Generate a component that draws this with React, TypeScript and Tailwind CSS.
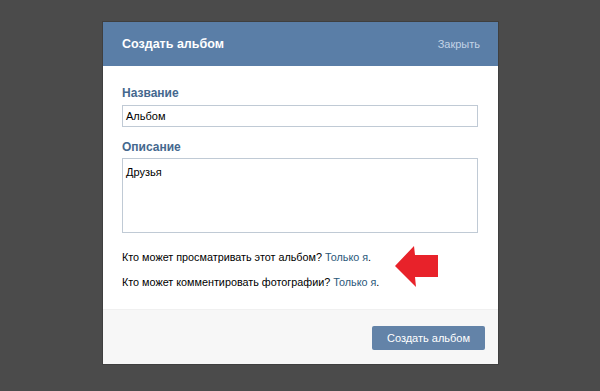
export default function App() {
  return (
    <div className="min-h-screen w-full bg-[#4b4b4b] flex justify-center items-start pt-[22px]" style={{ fontFamily: '"Liberation Sans", Arial, sans-serif' }}>
      <div className="w-[395px] ml-[1px] bg-white shadow-[0_0_0_1px_#3f3f3f]">
        {/* header */}
        <div className="h-[44px] bg-[#5a7ea7] flex items-center justify-between pl-[19px] pr-[18px]">
          <span className="text-[12.5px] font-bold text-white">Создать альбом</span>
          <span className="text-[11px] text-[#c3d3e6]">Закрыть</span>
        </div>

        {/* body */}
        <div className="pt-[20px] pl-[19px] pr-[20px] pb-[20px]">
          <div className="text-[12px] leading-[14px] font-bold text-[#45688e]">Название</div>
          <div className="mt-[5px] h-[22px] border border-[#c0cad5] flex items-center px-[3px] text-[11px] text-black">Альбом</div>

          <div className="mt-[13px] text-[12px] leading-[14px] font-bold text-[#45688e]">Описание</div>
          <div className="mt-[4px] h-[75px] border border-[#c0cad5] px-[3px] pt-[5px] text-[11px] text-black">Друзья</div>

          <div className="relative mt-[17px] text-[10.8px]">
            <div className="leading-[14px] text-black">
              Кто может просматривать этот альбом? <span className="text-[#2b587a]">Только я</span>.
            </div>
            <div className="mt-[11px] leading-[14px] text-black">
              Кто может комментировать фотографии? <span className="text-[#2b587a]">Только я</span>.
            </div>
            <svg className="absolute left-[273px] top-[-4px]" width="44" height="42" viewBox="0 0 44 42">
              <polygon points="0,20 19,0 20,9 43,9 43,31 20,31 21,41" fill="#e8222a" />
            </svg>
          </div>
        </div>

        {/* footer */}
        <div className="h-[55px] bg-[#f7f7f7] border-t border-[#f0f0f0] flex items-start justify-end pt-[16px] pr-[13px]">
          <div className="w-[113px] h-[24px] bg-[#6383a8] rounded-[2px] flex items-center justify-center text-[11px] text-white">Создать альбом</div>
        </div>
      </div>
    </div>
  );
}
